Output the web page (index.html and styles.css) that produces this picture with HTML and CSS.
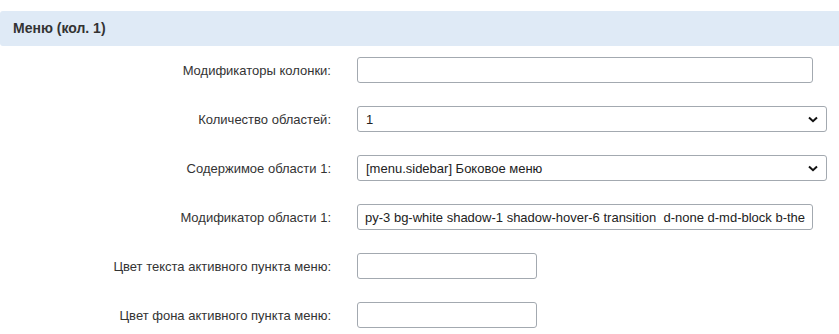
FILE: index.html
```html
<!DOCTYPE html>
<html lang="ru">
<head>
    <meta charset="UTF-8">
    <meta name="viewport" content="width=device-width, initial-scale=1.0">
    <title>Меню (кол. 1)</title>
    <link rel="stylesheet" href="styles.css">
</head>
<body>
    <div class="panel-heading">Меню (кол. 1)</div>

    <form class="settings">
        <label for="col-mod">Модификаторы колонки:</label>
        <input type="text" id="col-mod" class="field field-wide">

        <label for="areas">Количество областей:</label>
        <div class="select-wrap">
            <select id="areas" class="field">
                <option>1</option>
            </select>
            <svg class="chevron" width="10" height="7" viewBox="0 0 10 7"><path d="M1 1.5 L5 5.2 L9 1.5" fill="none" stroke="#111" stroke-width="2"/></svg>
        </div>

        <label for="area1">Содержимое области 1:</label>
        <div class="select-wrap">
            <select id="area1" class="field">
                <option>[menu.sidebar] Боковое меню</option>
            </select>
            <svg class="chevron" width="10" height="7" viewBox="0 0 10 7"><path d="M1 1.5 L5 5.2 L9 1.5" fill="none" stroke="#111" stroke-width="2"/></svg>
        </div>

        <label for="area1-mod">Модификатор области 1:</label>
        <input type="text" id="area1-mod" class="field field-wide" value="py-3 bg-white shadow-1 shadow-hover-6 transition  d-none d-md-block b-theme">

        <label for="active-color">Цвет текста активного пункта меню:</label>
        <input type="text" id="active-color" class="field field-short">

        <label for="active-bg">Цвет фона активного пункта меню:</label>
        <input type="text" id="active-bg" class="field field-short">
    </form>
</body>
</html>
```

FILE: styles.css
```css
body {
    margin: 0;
    font-family: "Liberation Sans", Arial, sans-serif;
    font-size: 13px;
    color: #333;
    background: #fff;
}
.panel-heading {
    margin-top: 11px;
    height: 35px;
    line-height: 35px;
    padding-left: 13px;
    background-color: #dfeaf6;
    border-radius: 3px 0 0 3px;
    font-size: 14px;
    font-weight: bold;
    color: #333;
}
.settings {
    display: grid;
    grid-template-columns: 331px 1fr;
    column-gap: 26px;
    row-gap: 23px;
    margin-top: 11px;
    align-items: center;
}
.settings label {
    text-align: right;
    color: #333;
}
.field {
    box-sizing: border-box;
    height: 26px;
    padding: 0 8px;
    border: 1px solid #a3a9b0;
    border-radius: 3px;
    background: #fff;
    font-family: "Liberation Sans", Arial, sans-serif;
    font-size: 13px;
    color: #222;
    outline: none;
}
.field-wide {
    width: 456px;
    padding: 0 7px;
}
.field-short {
    width: 180px;
}
.select-wrap {
    position: relative;
    width: 470px;
}
.select-wrap select {
    width: 100%;
    appearance: none;
    -webkit-appearance: none;
}
.chevron {
    position: absolute;
    right: 9px;
    top: 10px;
    pointer-events: none;
}
```
